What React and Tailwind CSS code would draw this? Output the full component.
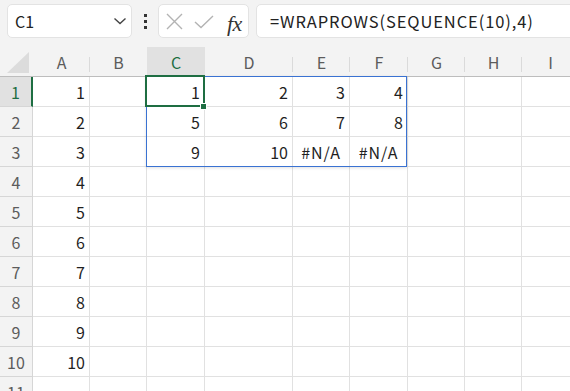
import React from "react";

const cols = ["A", "B", "C", "D", "E", "F", "G", "H", "I"];
const widths = ["w-[57px]", "w-[57px]", "w-[58px]", "w-[88px]", "w-[57px]", "w-[58px]", "w-[57px]", "w-[57px]", "w-[57px]"];

const data = {
  1: { A: "1", C: "1", D: "2", E: "3", F: "4" },
  2: { A: "2", C: "5", D: "6", E: "7", F: "8" },
  3: { A: "3", C: "9", D: "10", E: "#N/A", F: "#N/A" },
  4: { A: "4" },
  5: { A: "5" },
  6: { A: "6" },
  7: { A: "7" },
  8: { A: "8" },
  9: { A: "9" },
  10: { A: "10" },
  11: {},
};

function Cell({ v, w }) {
  const isErr = v && v.startsWith("#");
  return (
    <div
      className={`${w} h-[30px] shrink-0 border-r border-b border-[#e1e1e1] bg-white flex items-center ${
        isErr ? "justify-center tracking-[1px]" : "justify-end pr-[4px]"
      } text-[16px] text-[#1f1f1f]`}
    >
      {v}
    </div>
  );
}

export default function App() {
  return (
    <div className="w-[570px] h-[391px] overflow-hidden bg-[#f3f3f3] font-['Noto_Sans_CJK_JP',sans-serif] relative">
      {/* toolbar */}
      <div className="h-[47px] flex items-start pt-[4px] pl-[7px]">
        <div className="w-[125px] h-[34px] rounded-[5px] border border-[#e3e3e3] bg-white flex items-center justify-between pl-[7px] pr-[4px] shrink-0">
          <span className="text-[16px] text-[#222]">C1</span>
          <svg width="14" height="8" viewBox="0 0 14 8">
            <path d="M1.5 1.5 L7 6.5 L12.5 1.5" fill="none" stroke="#444" strokeWidth="1.4" />
          </svg>
        </div>
        <div className="w-[26px] h-[34px] flex flex-col items-center justify-center gap-[3px] shrink-0">
          <span className="w-[3px] h-[3px] bg-[#333]" />
          <span className="w-[3px] h-[3px] bg-[#333]" />
          <span className="w-[3px] h-[3px] bg-[#333]" />
        </div>
        <div className="w-[91px] h-[34px] rounded-[5px] border border-[#e3e3e3] bg-white flex items-center shrink-0 relative">
          <svg className="absolute left-[7px] top-[8px]" width="17" height="17" viewBox="0 0 17 17">
            <path d="M1 1 L16 16 M16 1 L1 16" stroke="#b3b3b3" strokeWidth="1.4" />
          </svg>
          <svg className="absolute left-[35px] top-[10px]" width="20" height="14" viewBox="0 0 20 14">
            <path d="M1 7 L7 12.5 L19 1" fill="none" stroke="#b3b3b3" strokeWidth="1.4" />
          </svg>
          <span className="absolute left-[68px] top-[2px] text-[22px] italic text-[#333] font-['Liberation_Serif',serif] tracking-[-0.5px]">
            fx
          </span>
        </div>
        <div className="ml-[7px] w-[330px] h-[34px] rounded-l-[5px] border border-[#e3e3e3] bg-white flex items-center pl-[13px] shrink-0">
          <span className="text-[16.5px] tracking-[0.9px] text-[#222] whitespace-nowrap">=WRAPROWS(SEQUENCE(10),4)</span>
        </div>
      </div>

      {/* grid */}
      <div className="relative">
        {/* header row */}
        <div className="flex h-[30px]">
          <div className="w-[33px] shrink-0 h-[30px] border-b border-[#bdbdbd] relative">
            <svg className="absolute left-[7px] top-[5px]" width="23" height="21" viewBox="0 0 23 21">
              <path d="M22 0 L22 21 L0 21 Z" fill="#dcdcdc" />
            </svg>
          </div>
          {cols.map((c, i) => (
            <div
              key={c}
              className={`${widths[i]} shrink-0 h-[30px] border-b border-[#bdbdbd] flex items-center justify-center text-[16px] ${
                c === "C" ? "bg-[#e1e1e1] text-[#1e6e42]" : "text-[#5c5c5c]"
              } relative`}
            >
              {c}
              {c !== "C" && c !== "B" && (
                <span className="absolute right-0 bottom-[4px] top-[10px] w-px bg-[#dadada]" />
              )}
            </div>
          ))}
        </div>
        {Array.from({ length: 11 }, (_, r) => r + 1).map((r) => (
          <div key={r} className="flex h-[30px]">
            <div
              className={`w-[33px] shrink-0 h-[30px] border-b border-r flex items-center justify-center text-[16px] ${
                r === 1
                  ? "bg-[#e1e1e1] text-[#1e6e42] border-r-[#1e6e42] border-r-2 border-b-[#d6d6d6]"
                  : "text-[#5c5c5c] border-[#d6d6d6]"
              }`}
            >
              {r}
            </div>
            {cols.map((c, i) => (
              <Cell key={c} v={data[r][c]} w={widths[i]} />
            ))}
          </div>
        ))}

        {/* spill range border */}
        <div className="absolute left-[146px] top-[29px] w-[261px] h-[91px] border border-[#3a72d2] shadow-[0_1px_3px_rgba(0,0,0,0.12)] pointer-events-none" />
        {/* active cell */}
        <div className="absolute left-[145px] top-[28px] w-[60px] h-[32px] border-2 border-[#1e6e42] pointer-events-none" />
        <div className="absolute left-[200px] top-[56px] w-[7px] h-[7px] bg-[#1e6e42] border border-white pointer-events-none" />
      </div>
    </div>
  );
}
